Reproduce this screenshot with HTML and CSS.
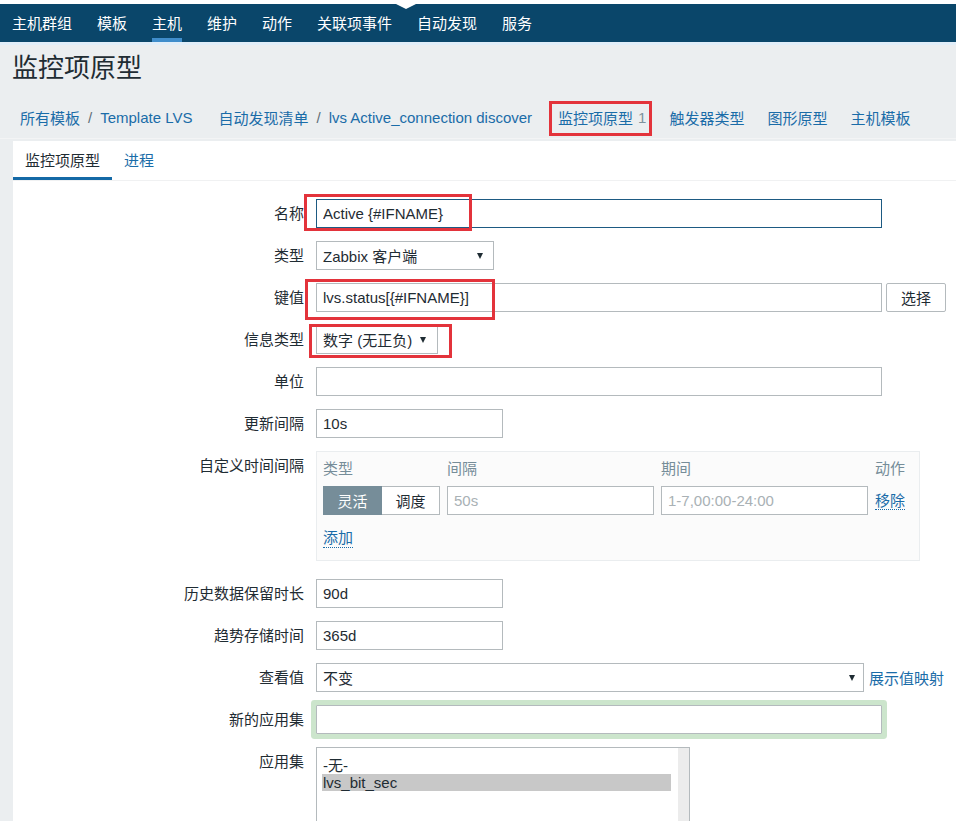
FILE: index.html
```html
<!DOCTYPE html>
<html lang="zh-CN">
<head>
<meta charset="utf-8">
<title>监控项原型</title>
<link rel="stylesheet" href="styles.css">
</head>
<body>
<div class="topstrip"><span class="notch"></span></div>
<nav class="mainnav">
  <a class="nav-item">主机群组</a>
  <a class="nav-item">模板</a>
  <a class="nav-item active">主机</a>
  <a class="nav-item">维护</a>
  <a class="nav-item">动作</a>
  <a class="nav-item">关联项事件</a>
  <a class="nav-item">自动发现</a>
  <a class="nav-item">服务</a>
</nav>
<div class="subnav"></div>
<header class="page-title"><h1>监控项原型</h1></header>
<div class="breadcrumbs">
  <div class="crumb-group"><a class="link">所有模板</a><span class="sep">/</span><a class="link">Template LVS</a></div>
  <div class="crumb-group path"><a class="link">自动发现清单</a><span class="sep">/</span><a class="link">lvs Active_connection discover</a></div>
  <div class="crumb-group path"><a class="link">监控项原型</a><span class="count">1</span></div>
  <div class="crumb-group"><a class="link">触发器类型</a></div>
  <div class="crumb-group"><a class="link">图形原型</a></div>
  <div class="crumb-group"><a class="link">主机模板</a></div>
</div>
<main class="panel">
  <div class="tabs">
    <a class="tab active">监控项原型</a>
    <a class="tab">进程</a>
  </div>
  <form class="form">
    <div class="row">
      <label class="lbl">名称</label>
      <div class="field"><input class="text w-wide focused" value="Active {#IFNAME}"></div>
    </div>
    <div class="row">
      <label class="lbl">类型</label>
      <div class="field"><div class="select w-type"><span>Zabbix 客户端</span><span class="arrow"></span></div></div>
    </div>
    <div class="row">
      <label class="lbl">键值</label>
      <div class="field"><input class="text w-wide" value="lvs.status[{#IFNAME}]"><button type="button" class="btn">选择</button></div>
    </div>
    <div class="row">
      <label class="lbl">信息类型</label>
      <div class="field"><div class="select w-info"><span>数字 (无正负)</span><span class="arrow"></span></div></div>
    </div>
    <div class="row">
      <label class="lbl">单位</label>
      <div class="field"><input class="text w-wide" value=""></div>
    </div>
    <div class="row">
      <label class="lbl">更新间隔</label>
      <div class="field"><input class="text w-small" value="10s"></div>
    </div>
    <div class="row row-box">
      <label class="lbl">自定义时间间隔</label>
      <div class="field">
        <div class="interval-box">
          <div class="interval-grid">
            <span class="col-head">类型</span>
            <span class="col-head">间隔</span>
            <span class="col-head">期间</span>
            <span class="col-head">动作</span>
            <div class="segmented"><span class="seg on">灵活</span><span class="seg">调度</span></div>
            <input class="text" placeholder="50s">
            <input class="text" placeholder="1-7,00:00-24:00">
            <span class="action"><a class="link dotted">移除</a></span>
          </div>
          <a class="link dotted add">添加</a>
        </div>
      </div>
    </div>
    <div class="row">
      <label class="lbl">历史数据保留时长</label>
      <div class="field"><input class="text w-small" value="90d"></div>
    </div>
    <div class="row">
      <label class="lbl">趋势存储时间</label>
      <div class="field"><input class="text w-small" value="365d"></div>
    </div>
    <div class="row">
      <label class="lbl">查看值</label>
      <div class="field"><div class="select w-view"><span>不变</span><span class="arrow"></span></div><a class="link valuemap">展示值映射</a></div>
    </div>
    <div class="row">
      <label class="lbl">新的应用集</label>
      <div class="field"><input class="text w-wide glow" value=""></div>
    </div>
    <div class="row">
      <label class="lbl">应用集</label>
      <div class="field">
        <div class="listbox">
          <div class="options">
            <div class="opt">-无-</div>
            <div class="opt sel">lvs_bit_sec</div>
          </div>
          <div class="scrolltrack"></div>
        </div>
      </div>
    </div>
  </form>
</main>
<div class="mark mark-crumb"></div>
<div class="mark mark-name"></div>
<div class="mark mark-key"></div>
<div class="mark mark-info"></div>
</body>
</html>
```
FILE: styles.css
```css
* { box-sizing: border-box; }
html, body { margin: 0; padding: 0; }
body {
  position: relative;
  height: 821px;
  overflow: hidden;
  background: #ebeef0;
  font-family: "Liberation Sans", "Noto Sans CJK SC", sans-serif;
  font-size: 15px;
  color: #1f2c33;
}
a { text-decoration: none; cursor: pointer; }
.link { color: #1a6ca8; }
.dotted { border-bottom: 1px dotted #1a6ca8; }

.topstrip { height: 4px; background: #fff; position: relative; }
.notch {
  position: absolute; left: 396px; top: 4px; z-index: 2;
  width: 0; height: 0;
  border-left: 10px solid transparent;
  border-right: 10px solid transparent;
  border-top: 5px solid #fff;
}
.mainnav { display: flex; height: 38px; background: #0a466a; }
.nav-item {
  position: relative;
  display: flex; align-items: center;
  padding: 0 13px 2px 12px;
  color: #fff;
}
.nav-item.active::after {
  content: ""; position: absolute; left: 12px; right: 13px; bottom: 0;
  height: 4px; background: #3f8dcb;
}
.subnav { height: 3px; background: #e1eef9; }

.page-title { height: 46px; display: flex; align-items: center; padding-left: 12px; }
.page-title h1 { margin: 0; font-size: 26px; font-weight: normal; line-height: 1; color: #1f2c33; }

.breadcrumbs {
  display: flex; align-items: center; gap: 23px;
  height: 48px; padding: 6px 0 0 20px;
  border-bottom: 1px solid #f3f4f5;
}
.crumb-group { display: flex; align-items: center; white-space: nowrap; }
.crumb-group.path { margin-left: 3px; }
.sep { color: #5f6f78; margin: 0 8px; }
.count { color: #7d929d; margin-left: 5px; }

.panel { margin: 2px 0 0 13px; background: #fff; height: 700px; }
.tabs { display: flex; height: 40px; border-bottom: 1px solid #f0f1f2; }
.tab {
  display: flex; align-items: center;
  padding: 0 12px; height: 39px;
  border-bottom: 3px solid transparent;
  color: #1a6ca8;
}
.tab.active { color: #1f2c33; border-bottom-color: #1469a6; }

.form { padding-top: 18px; }
.row { display: flex; align-items: flex-start; margin-bottom: 13px; }
.row-box { margin-bottom: 18px; }
.lbl { width: 291px; flex-shrink: 0; margin-right: 12px; text-align: right; line-height: 29px; white-space: nowrap; }
.field { display: flex; align-items: center; }

.text {
  height: 29px; padding: 0 6px;
  border: 1px solid #b4babd; border-radius: 0;
  background: #fff; color: #1f2c33;
  font: inherit; outline: none;
}
.text::placeholder { color: #a9b1b5; }
.w-wide { width: 566px; }
.w-small { width: 187px; }
.focused { border-color: #1d5a82; }
.glow { box-shadow: 0 0 0 5px #cce5cc; border-radius: 1px; }

.select {
  display: flex; align-items: center; justify-content: space-between;
  height: 29px; padding: 0 8px 0 6px;
  border: 1px solid #b4babd; background: #fff; white-space: nowrap;
}
.arrow { width: 0; height: 0; border-left: 3.5px solid transparent; border-right: 3.5px solid transparent; border-top: 6px solid #1f2c33; margin-right: 2px; }
.w-type { width: 178px; }
.w-info { width: 122px; padding-right: 9px; }
.w-view { width: 548px; padding-right: 6px; }
.valuemap { margin-left: 5px; }

.btn {
  margin-left: 4px; width: 60px; height: 29px;
  border: 1px solid #b4babd; border-radius: 2px;
  background: #fff; color: #1f2c33; font: inherit;
}

.interval-box {
  width: 604px; height: 110px;
  padding: 7px 6px 0 6px;
  border: 1px solid #eaedef; background: #fbfbfb;
}
.interval-grid {
  display: grid;
  grid-template-columns: 117px 207px 207px auto;
  column-gap: 7px; row-gap: 7px;
  align-items: center;
}
.col-head { color: #768d99; line-height: 20px; }
.interval-grid .text { width: 207px; }
.segmented { display: flex; height: 29px; }
.seg {
  flex: 1; display: flex; align-items: center; justify-content: center;
  border: 1px solid #b4babd; background: #fff; color: #1f2c33;
}
.seg.on { background: #768d99; border-color: #768d99; color: #fff; }
.seg + .seg { border-left: none; }
.action { line-height: 20px; }
.add { display: inline-block; margin-top: 13px; line-height: 19px; }

.listbox { display: flex; width: 374px; height: 170px; border: 1px solid #b4babd; background: #fff; }
.options { flex: 1; padding: 9px 7px 0 5px; }
.opt { line-height: 17px; padding-left: 1px; }
.opt.sel { background: #c8c8c8; }
.scrolltrack { width: 11px; background: #ececec; }

.mark { position: absolute; border: 3px solid #e3333b; pointer-events: none; }
.mark-crumb { left: 549px; top: 101px; width: 103px; height: 35px; }
.mark-name { left: 304px; top: 194px; width: 168px; height: 37px; }
.mark-key { left: 305px; top: 279px; width: 190px; height: 41px; }
.mark-info { left: 309px; top: 324px; width: 143px; height: 34px; }
```
